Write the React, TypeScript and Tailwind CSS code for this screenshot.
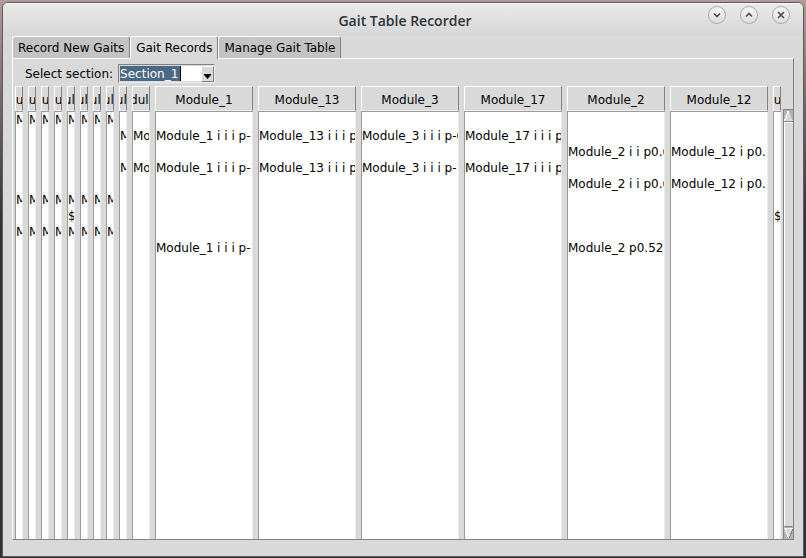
import React from "react";

type Size = "narrow" | "medium" | "wide" | "last";

type Column = { name: string; size: Size; cells: Record<number, string> };

const MODULE_COLUMNS: Column[] = [
  { name: "Module_4", size: "narrow", cells: { 0: "M", 5: "M", 7: "M" } },
  { name: "Module_5", size: "narrow", cells: { 0: "M", 5: "M", 7: "M" } },
  { name: "Module_6", size: "narrow", cells: { 0: "M", 5: "M", 7: "M" } },
  { name: "Module_7", size: "narrow", cells: { 0: "M", 5: "M", 7: "M" } },
  { name: "Module_10", size: "narrow", cells: { 0: "M", 5: "M", 6: "$", 7: "M" } },
  { name: "Module_11", size: "narrow", cells: { 0: "M", 5: "M", 7: "M" } },
  { name: "Module_14", size: "narrow", cells: { 0: "M", 5: "M", 7: "M" } },
  { name: "Module_15", size: "narrow", cells: { 0: "M", 5: "M", 7: "M" } },
  { name: "Module_16", size: "narrow", cells: { 1: "M", 3: "M" } },
  { name: "Module_8", size: "medium", cells: { 1: "Mo", 3: "Mo" } },
  { name: "Module_1", size: "wide", cells: { 1: "Module_1 i i i p-1", 3: "Module_1 i i i p-1", 8: "Module_1 i i i p-1" } },
  { name: "Module_13", size: "wide", cells: { 1: "Module_13 i i i p", 3: "Module_13 i i i p" } },
  { name: "Module_3", size: "wide", cells: { 1: "Module_3 i i i p-0", 3: "Module_3 i i i p-1" } },
  { name: "Module_17", size: "wide", cells: { 1: "Module_17 i i i p", 3: "Module_17 i i i p" } },
  { name: "Module_2", size: "wide", cells: { 2: "Module_2 i i p0.6", 4: "Module_2 i i p0.6", 8: "Module_2 p0.52" } },
  { name: "Module_12", size: "wide", cells: { 2: "Module_12 i p0.", 4: "Module_12 i p0." } },
  { name: "Module_9", size: "last", cells: { 6: "$" } },
];

const COLUMN_WIDTH: Record<Size, string> = {
  narrow: "w-[13px]",
  medium: "w-[23px]",
  wide: "",
  last: "w-[10px]",
};

const HEADER_GAP: Record<Size, string> = {
  narrow: "pr-[5px]",
  medium: "pr-[5px]",
  wide: "pr-[5px]",
  last: "pr-[2px]",
};

const CELL_GAP: Record<Size, string> = {
  narrow: "border-r-[5px]",
  medium: "border-r-[5px]",
  wide: "border-r-[5px]",
  last: "border-r-[2px]",
};

const CELL =
  "border-l border-r-[#d9d9d9] border-l-[#9a9a9a] bg-white p-0 shadow-[inset_-1px_0_#ececec]";

const ROWS = [0, 1, 2, 3, 4, 5, 6, 7, 8];

function RecordTable() {
  return (
    <table className="h-full w-full table-fixed border-separate border-spacing-0">
      <colgroup>
        {MODULE_COLUMNS.map((c) => (
          <col key={c.name} className={COLUMN_WIDTH[c.size]} />
        ))}
      </colgroup>
      <thead>
        <tr>
          {MODULE_COLUMNS.map((c) => (
            <th key={c.name} scope="col" className={`p-0 font-normal ${HEADER_GAP[c.size]}`}>
              <div className="flex h-[25px] items-center justify-center overflow-hidden border border-t-white border-r-[#828282] border-b-[#ececec] border-l-white pt-[3px] whitespace-nowrap">
                {c.name}
              </div>
            </th>
          ))}
        </tr>
      </thead>
      <tbody>
        <tr className="h-px">
          {MODULE_COLUMNS.map((c) => (
            <td key={c.name} className={`h-px border-[#d9d9d9] bg-[#9a9a9a] p-0 ${CELL_GAP[c.size]}`} />
          ))}
        </tr>
        {ROWS.map((row) => (
          <tr key={row} className="h-4">
            {MODULE_COLUMNS.map((c) => (
              <td key={c.name} className={`${CELL} ${CELL_GAP[c.size]}`}>
                <div className="mr-px h-4 overflow-hidden leading-4 whitespace-nowrap">{c.cells[row]}</div>
              </td>
            ))}
          </tr>
        ))}
        <tr>
          {MODULE_COLUMNS.map((c) => (
            <td key={c.name} className={`${CELL} ${CELL_GAP[c.size]}`} />
          ))}
        </tr>
      </tbody>
    </table>
  );
}

function Scrollbar() {
  return (
    <div className="mt-[23px] flex w-[10px] shrink-0 flex-col border-t border-l border-[#828282] bg-[#b3b3b3]">
      <button type="button" aria-label="Scroll up" className="block h-3">
        <svg viewBox="0 0 9 12" className="h-3 w-full" shapeRendering="crispEdges">
          <path d="M4.5 1L9 11H0Z" fill="#d9d9d9" />
          <path d="M4.5 1L0.5 11" stroke="#fff" strokeWidth="1.5" />
          <path d="M0 11.5H9" stroke="#828282" />
        </svg>
      </button>
      <div className="flex-1 border border-t-white border-r-[#d9d9d9] border-b-[#828282] border-l-white bg-[#d9d9d9]" />
      <button type="button" aria-label="Scroll down" className="block h-3">
        <svg viewBox="0 0 9 12" className="h-3 w-full" shapeRendering="crispEdges">
          <path d="M0 1H9L4.5 11Z" fill="#d9d9d9" />
          <path d="M0 1.5H9M0.5 1L4.5 11" stroke="#fff" />
          <path d="M9 2L5 11" stroke="#828282" />
        </svg>
      </button>
    </div>
  );
}

function SectionSelect() {
  return (
    <div className="relative ml-[5px] h-[19px] w-[97px] border border-t-[#828282] border-r-[#ececec] border-b-[#ececec] border-l-[#828282] bg-[#d9d9d9] p-px">
      <select
        id="section"
        defaultValue="Section_1"
        className="block h-full w-full appearance-none bg-[linear-gradient(to_right,#4a6984_60px,#000_60px,#000_61px,#fff_61px)] pt-px leading-[15px] text-white outline-none"
      >
        <option>Section_1</option>
      </select>
      <span className="pointer-events-none absolute top-px right-0 bottom-0 flex w-[13px] items-end justify-center border border-t-white border-r-[#828282] border-b-[#828282] border-l-white bg-[#d9d9d9] pb-0.5">
        <svg viewBox="0 0 7 5" className="h-[5px] w-[7px]">
          <path d="M0 0H7V1L3.5 5L0 1Z" fill="#000" />
        </svg>
      </span>
    </div>
  );
}

function TitleButton({ label, d }: { label: string; d: string }) {
  return (
    <button
      type="button"
      aria-label={label}
      className="flex size-[18px] items-center justify-center rounded-full border border-[#a8a8a8] bg-linear-to-b from-[#f6f6f6] to-[#dedede]"
    >
      <svg viewBox="0 0 8 8" className="size-2" fill="none" stroke="#4a4a4a" strokeWidth="1.6">
        <path d={d} />
      </svg>
    </button>
  );
}

function Tab({ label, active = false }: { label: string; active?: boolean }) {
  return (
    <button
      role="tab"
      type="button"
      aria-selected={active}
      className={`rounded-t-[3px] border border-b-0 border-t-white border-r-[#828282] border-l-white px-[5px] ${
        active ? "z-10 -mb-px bg-[#d9d9d9]" : "bg-[#c3c3c3] pt-px"
      }`}
    >
      {label}
    </button>
  );
}

export default function App() {
  return (
    <div className="flex h-screen flex-col bg-linear-to-b from-[#b49a98] via-[#352f3a] via-40% to-[#302e36] px-[2px] pt-[2px] pb-px font-['DejaVu_Sans',sans-serif] text-xs text-black">
      <div className="flex min-h-0 flex-1 flex-col overflow-hidden rounded-t-md border border-[#5c5c5c] bg-[#d9d9d9]">
        <header className="flex h-[33px] shrink-0 items-center border-t border-white bg-linear-to-b from-[#e9e9e9] to-[#d6d6d6] pr-[13px]">
          <div className="w-[99px]" />
          <h1 className="flex-1 pt-px text-center font-['Open_Sans',sans-serif] text-sm font-semibold text-[#2e3436]">
            Gait Table Recorder
          </h1>
          <div className="flex gap-[14px] self-start pt-0.5">
            <TitleButton label="Minimize" d="M1 2.5L4 5.5L7 2.5" />
            <TitleButton label="Maximize" d="M1 5.5L4 2.5L7 5.5" />
            <TitleButton label="Close" d="M1 1L7 7M7 1L1 7" />
          </div>
        </header>
        <main className="flex min-h-0 flex-1 flex-col px-[9px] pb-4">
          <div role="tablist" className="flex h-[22px] shrink-0 items-stretch">
            <Tab label="Record New Gaits" />
            <Tab label="Gait Records" active />
            <Tab label="Manage Gait Table" />
          </div>
          <section className="flex min-h-0 flex-1 flex-col border border-t-white border-r-[#828282] border-b-[#828282] border-l-white">
            <div className="flex h-[27px] shrink-0 items-center pt-[2px] pl-3">
              <label htmlFor="section">Select section:</label>
              <SectionSelect />
            </div>
            <div className="flex min-h-0 flex-1 pl-[2px]">
              <div className="min-w-0 flex-1">
                <RecordTable />
              </div>
              <Scrollbar />
            </div>
          </section>
        </main>
      </div>
    </div>
  );
}
